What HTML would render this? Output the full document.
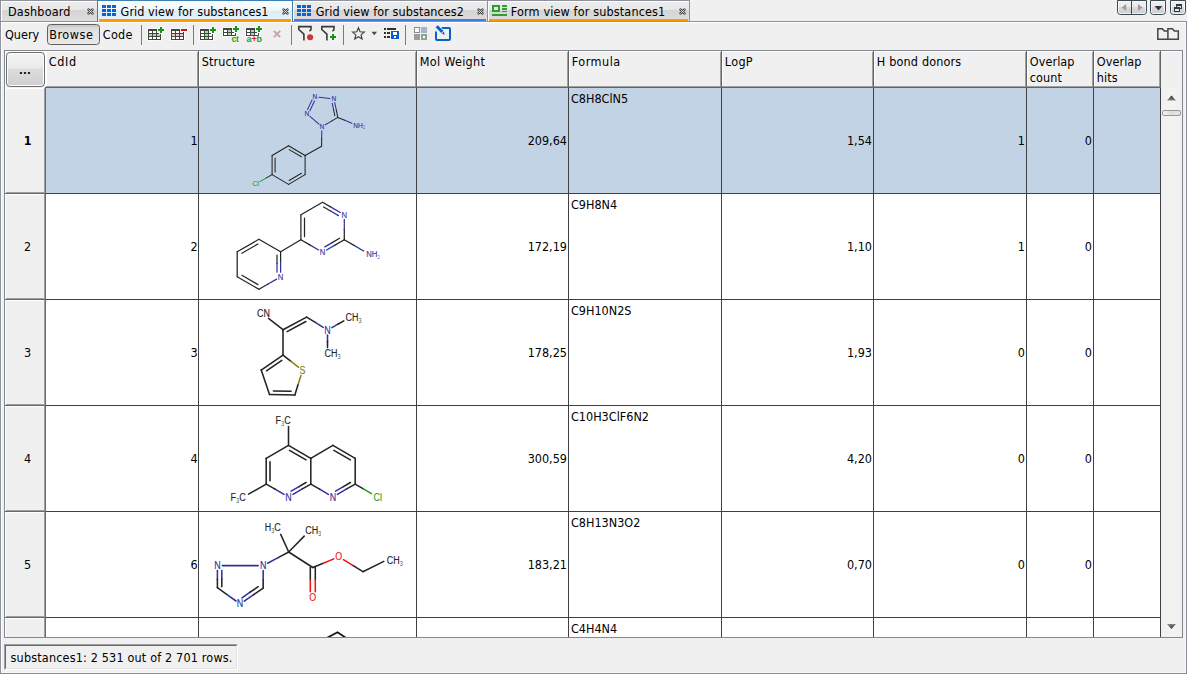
<!DOCTYPE html>
<html><head><meta charset="utf-8"><title>Grid view</title>
<style>
html,body{margin:0;padding:0}
body{width:1187px;height:674px;overflow:hidden;background:#f0f0f0;position:relative;
 font-family:"DejaVu Sans Condensed","Liberation Sans",sans-serif;font-size:12.5px;line-height:15px;color:#000}
.a{position:absolute}
.t{position:absolute;white-space:nowrap;line-height:15px;height:15px}
.r{text-align:right}
.b{font-weight:bold}
.tab{position:absolute;top:1px;height:20px;background:linear-gradient(#ececec 0,#e8e8e8 8px,#d4d4d4 8px,#dedede 19px);border-left:1px solid #fff;border-top:1px solid #fff;box-sizing:border-box}
.vs{position:absolute;width:1px;background:#8e929c}
.hc{position:absolute;top:52px;height:34px;background:#f0f0f0}
.vl{position:absolute;width:1px;background:#404040;top:88px;height:549px}
.hl{position:absolute;height:1px;background:#404040;left:46px;width:1115px}
.sep{position:absolute;top:25px;height:20px;width:1px;background:#7a7a7a}
svg{position:absolute;left:0;top:0;overflow:visible}
</style></head>
<body>
<div class="a" style="left:0;top:21px;width:1187px;height:1px;background:#8e929c"></div>
<div class="a" style="left:0;top:22px;width:1186px;height:1px;background:#fff"></div>
<div class="a" style="left:0;top:0;width:1px;height:674px;background:#8e929c"></div>
<div class="a" style="left:1px;top:1px;width:1px;height:20px;background:#fff"></div>
<div class="a" style="left:1px;top:22px;width:1px;height:650px;background:#fff"></div>
<div class="a" style="left:1186px;top:21px;width:1px;height:653px;background:#85899a"></div>
<div class="a" style="left:1185px;top:23px;width:1px;height:650px;background:#f8f8f8"></div>
<div class="a" style="left:0;top:673px;width:1187px;height:1px;background:#85899a"></div>
<div class="a" style="left:2px;top:672px;width:1184px;height:1px;background:#f8f8f8"></div>
<div class="a" style="left:0;top:0;width:690px;height:1px;background:#8e929c"></div>
<div class="tab" style="left:1px;width:96px"></div>
<div class="t" id="tx_dash" style="left:8px;letter-spacing:.19px;top:4px">Dashboard</div>
<div class="a" style="left:97px;top:0;width:196px;height:22px;background:linear-gradient(#fbfdfe 0,#f1f8fc 9px,#dcecf6 10px,#e9f3fa 20px);box-sizing:border-box;border:1px solid #3c7fb1;border-bottom:none"></div>
<div class="a" style="left:99px;top:19px;width:192px;height:3px;background:#ff9c00"></div>
<div class="t" id="tx_g1" style="left:120.6px;letter-spacing:.07px;top:4px">Grid view for substances1</div>
<div class="tab" style="left:293px;width:194px"></div>
<div class="a" style="left:294px;top:19px;width:192px;height:2px;background:#3f7fe0"></div>
<div class="vs" style="left:487px;top:0;height:21px"></div>
<div class="t" id="tx_g2" style="left:315.8px;letter-spacing:.08px;top:4px">Grid view for substances2</div>
<div class="tab" style="left:488px;width:201px"></div>
<div class="a" style="left:489px;top:19px;width:199px;height:2px;background:#ff9c00"></div>
<div class="vs" style="left:689px;top:0;height:21px"></div>
<div class="t" id="tx_f1" style="left:510.8px;letter-spacing:.15px;top:4px">Form view for substances1</div>
<div class="t" id="tx_query" style="left:5px;top:27px">Query</div>
<div class="a" style="left:47px;top:24px;width:53px;height:21px;box-sizing:border-box;border:1px solid #606060;border-radius:3.5px;background:linear-gradient(#c4c4c4 0,#dadada 3px,#e1e1e1 6px,#e9e9e9 19px)"></div>
<div class="t" id="tx_browse" style="left:49.2px;letter-spacing:.56px;top:27px">Browse</div>
<div class="t" id="tx_code" style="left:102.8px;letter-spacing:.27px;top:27px">Code</div>
<div class="sep" style="left:141px"></div>
<div class="sep" style="left:193px"></div>
<div class="sep" style="left:291px"></div>
<div class="sep" style="left:343px"></div>
<div class="sep" style="left:405px"></div>
<div class="a" style="left:4px;top:50px;width:1179px;height:588px;box-sizing:border-box;border:1px solid #828790"></div>
<div class="a" style="left:5px;top:51px;width:1177px;height:1px;background:#fff"></div>
<div class="a" style="left:5px;top:51px;width:1px;height:586px;background:#fff"></div>
<div class="a" style="left:46px;top:88px;width:1114px;height:549px;background:#fff"></div>
<div class="a" style="left:46px;top:88px;width:1114px;height:105px;background:#c3d3e6"></div>
<div class="a" style="left:46px;top:86px;width:1115px;height:1px;background:#a0a0a0"></div>
<div class="a" style="left:45px;top:87px;width:1116px;height:1px;background:#646464"></div>
<div class="a" style="left:45px;top:52px;width:2px;height:34px;background:#fff"></div>
<div class="a" style="left:197px;top:52px;width:1px;height:35px;background:#a0a0a0"></div>
<div class="a" style="left:198px;top:51px;width:1px;height:37px;background:#646464"></div>
<div class="t" id="h0" style="left:48.8px;top:53.5px;height:auto;line-height:16px;letter-spacing:0.62px">CdId</div>
<div class="a" style="left:199px;top:52px;width:1px;height:34px;background:#fff"></div>
<div class="a" style="left:415px;top:52px;width:1px;height:35px;background:#a0a0a0"></div>
<div class="a" style="left:416px;top:51px;width:1px;height:37px;background:#646464"></div>
<div class="t" id="h1" style="left:201.8px;top:53.5px;height:auto;line-height:16px;letter-spacing:0.12px">Structure</div>
<div class="a" style="left:417px;top:52px;width:1px;height:34px;background:#fff"></div>
<div class="a" style="left:567px;top:52px;width:1px;height:35px;background:#a0a0a0"></div>
<div class="a" style="left:568px;top:51px;width:1px;height:37px;background:#646464"></div>
<div class="t" id="h2" style="left:419.8px;top:53.5px;height:auto;line-height:16px;letter-spacing:0.3px">Mol Weight</div>
<div class="a" style="left:569px;top:52px;width:1px;height:34px;background:#fff"></div>
<div class="a" style="left:720px;top:52px;width:1px;height:35px;background:#a0a0a0"></div>
<div class="a" style="left:721px;top:51px;width:1px;height:37px;background:#646464"></div>
<div class="t" id="h3" style="left:571.8px;top:53.5px;height:auto;line-height:16px;letter-spacing:0.5px">Formula</div>
<div class="a" style="left:722px;top:52px;width:1px;height:34px;background:#fff"></div>
<div class="a" style="left:872px;top:52px;width:1px;height:35px;background:#a0a0a0"></div>
<div class="a" style="left:873px;top:51px;width:1px;height:37px;background:#646464"></div>
<div class="t" id="h4" style="left:724.8px;top:53.5px;height:auto;line-height:16px;letter-spacing:0.33px">LogP</div>
<div class="a" style="left:874px;top:52px;width:1px;height:34px;background:#fff"></div>
<div class="a" style="left:1025px;top:52px;width:1px;height:35px;background:#a0a0a0"></div>
<div class="a" style="left:1026px;top:51px;width:1px;height:37px;background:#646464"></div>
<div class="t" id="h5" style="left:876.8px;top:53.5px;height:auto;line-height:16px;letter-spacing:0.17px">H bond donors</div>
<div class="a" style="left:1027px;top:52px;width:1px;height:34px;background:#fff"></div>
<div class="a" style="left:1092px;top:52px;width:1px;height:35px;background:#a0a0a0"></div>
<div class="a" style="left:1093px;top:51px;width:1px;height:37px;background:#646464"></div>
<div class="t" id="h6" style="left:1029.8px;top:53.5px;height:auto;line-height:16px;letter-spacing:0.08px">Overlap<br>count</div>
<div class="a" style="left:1094px;top:52px;width:1px;height:34px;background:#fff"></div>
<div class="a" style="left:1159px;top:52px;width:1px;height:35px;background:#a0a0a0"></div>
<div class="a" style="left:1160px;top:51px;width:1px;height:37px;background:#646464"></div>
<div class="t" id="h7" style="left:1096.8px;top:53.5px;height:auto;line-height:16px;letter-spacing:0.08px">Overlap<br>hits</div>
<div class="vl" style="left:198px"></div>
<div class="vl" style="left:416px"></div>
<div class="vl" style="left:568px"></div>
<div class="vl" style="left:721px"></div>
<div class="vl" style="left:873px"></div>
<div class="vl" style="left:1026px"></div>
<div class="vl" style="left:1093px"></div>
<div class="vl" style="left:1160px"></div>
<div class="a" style="left:44px;top:88px;width:1px;height:549px;background:#a0a0a0"></div>
<div class="a" style="left:45px;top:88px;width:1px;height:549px;background:#696969"></div>
<div class="a" style="left:6px;top:88px;width:38px;height:1px;background:#fff"></div>
<div class="a" style="left:6px;top:192px;width:39px;height:1px;background:#a0a0a0"></div>
<div class="a" style="left:5px;top:193px;width:41px;height:1px;background:#696969"></div>
<div class="hl" style="top:193px"></div>
<div class="a" style="left:6px;top:194px;width:38px;height:1px;background:#fff"></div>
<div class="a" style="left:6px;top:298px;width:39px;height:1px;background:#a0a0a0"></div>
<div class="a" style="left:5px;top:299px;width:41px;height:1px;background:#696969"></div>
<div class="hl" style="top:299px"></div>
<div class="a" style="left:6px;top:300px;width:38px;height:1px;background:#fff"></div>
<div class="a" style="left:6px;top:404px;width:39px;height:1px;background:#a0a0a0"></div>
<div class="a" style="left:5px;top:405px;width:41px;height:1px;background:#696969"></div>
<div class="hl" style="top:405px"></div>
<div class="a" style="left:6px;top:406px;width:38px;height:1px;background:#fff"></div>
<div class="a" style="left:6px;top:510px;width:39px;height:1px;background:#a0a0a0"></div>
<div class="a" style="left:5px;top:511px;width:41px;height:1px;background:#696969"></div>
<div class="hl" style="top:511px"></div>
<div class="a" style="left:6px;top:512px;width:38px;height:1px;background:#fff"></div>
<div class="a" style="left:6px;top:616px;width:39px;height:1px;background:#a0a0a0"></div>
<div class="a" style="left:5px;top:617px;width:41px;height:1px;background:#696969"></div>
<div class="hl" style="top:617px"></div>
<div class="a" style="left:6px;top:618px;width:38px;height:1px;background:#fff"></div>
<div class="a" style="left:6px;top:52px;width:39px;height:35px;box-sizing:border-box;border:1px solid #707070;border-radius:4px;background:linear-gradient(#f4f4f4 0,#ebebeb 15px,#dddddd 16px,#cfcfcf 33px);box-shadow:inset 0 0 0 1px #fbfbfb"></div>
<div class="t b" id="dots" style="left:19px;top:63px;letter-spacing:0.2px;font-size:11px">...</div>
<div class="t b" id="rn0" style="left:8.6px;width:38px;text-align:center;top:133px">1</div>
<div class="t r" id="cd0" style="left:46px;width:151.6px;top:133px">1</div>
<div class="t r" id="mw0" style="left:417px;width:150px;top:133px">209,64</div>
<div class="t" id="fm0" style="left:571px;top:91px">C8H8ClN5</div>
<div class="t r" id="lp0" style="left:722px;width:150px;top:133px">1,54</div>
<div class="t r" id="hb0" style="left:874px;width:151px;top:133px">1</div>
<div class="t r" id="oc0" style="left:1027px;width:65px;top:133px">0</div>
<div class="t" id="rn1" style="left:8.6px;width:38px;text-align:center;top:239px">2</div>
<div class="t r" id="cd1" style="left:46px;width:151.6px;top:239px">2</div>
<div class="t r" id="mw1" style="left:417px;width:150px;top:239px">172,19</div>
<div class="t" id="fm1" style="left:571px;top:197px">C9H8N4</div>
<div class="t r" id="lp1" style="left:722px;width:150px;top:239px">1,10</div>
<div class="t r" id="hb1" style="left:874px;width:151px;top:239px">1</div>
<div class="t r" id="oc1" style="left:1027px;width:65px;top:239px">0</div>
<div class="t" id="rn2" style="left:8.6px;width:38px;text-align:center;top:345px">3</div>
<div class="t r" id="cd2" style="left:46px;width:151.6px;top:345px">3</div>
<div class="t r" id="mw2" style="left:417px;width:150px;top:345px">178,25</div>
<div class="t" id="fm2" style="left:571px;top:303px">C9H10N2S</div>
<div class="t r" id="lp2" style="left:722px;width:150px;top:345px">1,93</div>
<div class="t r" id="hb2" style="left:874px;width:151px;top:345px">0</div>
<div class="t r" id="oc2" style="left:1027px;width:65px;top:345px">0</div>
<div class="t" id="rn3" style="left:8.6px;width:38px;text-align:center;top:451px">4</div>
<div class="t r" id="cd3" style="left:46px;width:151.6px;top:451px">4</div>
<div class="t r" id="mw3" style="left:417px;width:150px;top:451px">300,59</div>
<div class="t" id="fm3" style="left:571px;top:409px">C10H3ClF6N2</div>
<div class="t r" id="lp3" style="left:722px;width:150px;top:451px">4,20</div>
<div class="t r" id="hb3" style="left:874px;width:151px;top:451px">0</div>
<div class="t r" id="oc3" style="left:1027px;width:65px;top:451px">0</div>
<div class="t" id="rn4" style="left:8.6px;width:38px;text-align:center;top:557px">5</div>
<div class="t r" id="cd4" style="left:46px;width:151.6px;top:557px">6</div>
<div class="t r" id="mw4" style="left:417px;width:150px;top:557px">183,21</div>
<div class="t" id="fm4" style="left:571px;top:515px">C8H13N3O2</div>
<div class="t r" id="lp4" style="left:722px;width:150px;top:557px">0,70</div>
<div class="t r" id="hb4" style="left:874px;width:151px;top:557px">0</div>
<div class="t r" id="oc4" style="left:1027px;width:65px;top:557px">0</div>
<div class="t" id="fm5" style="left:571px;top:621px">C4H4N4</div>
<div class="a" style="left:4px;top:637px;width:1179px;height:1px;background:#828790"></div>
<div class="a" style="left:1161px;top:88px;width:21px;height:549px;background:linear-gradient(90deg,#f0f0f0,#f3f3f3 50%,#f0f0f0)"></div>
<div class="a" style="left:1162px;top:110px;width:19px;height:6px;box-sizing:border-box;border:1px solid #979797;border-radius:2px;background:linear-gradient(90deg,#f4f4f4,#dcdcdc 50%,#e6e6e6)"></div>
<div class="a" style="left:4px;top:644px;width:234px;height:26px;box-sizing:border-box;border-top:1px solid #a0a0a0;border-left:1px solid #a0a0a0;border-right:1px solid #fff;border-bottom:1px solid #fff"></div>
<div class="a" style="left:5px;top:645px;width:232px;height:24px;box-sizing:border-box;border-top:1px solid #696969;border-left:1px solid #696969;border-right:1px solid #e3e3e3;border-bottom:1px solid #e3e3e3"></div>
<div class="t" id="status" style="left:10.6px;letter-spacing:.17px;top:650px">substances1: 2 531 out of 2 701 rows.</div>
<svg width="1187" height="674" viewBox="0 0 1187 674" font-family="Liberation Sans,sans-serif">
<defs><clipPath id="cp"><rect x="199" y="88" width="217" height="549"/></clipPath></defs>
<g clip-path="url(#cp)" fill="none" stroke-width="1.05" stroke-linecap="round">
<path d="M318.9 97.3L330.0 98.4" stroke="#31319c"/>
<path d="M334.7 102.6L336.3 110.0" stroke="#31319c"/>
<path d="M336.3 110.0L337.8 117.4" stroke="#242424"/>
<path d="M332.2 103.2L333.5 109.4" stroke="#31319c"/>
<path d="M333.5 109.4L334.8 115.7" stroke="#242424"/>
<path d="M337.8 117.4L331.5 121.1" stroke="#242424"/>
<path d="M331.5 121.1L325.3 124.8" stroke="#31319c"/>
<path d="M319.0 124.2L309.9 116.3" stroke="#31319c"/>
<path d="M309.9 110.7L314.5 101.0" stroke="#31319c"/>
<path d="M307.5 109.6L312.1 99.9" stroke="#31319c"/>
<path d="M337.8 117.4L344.8 120.3" stroke="#242424"/>
<path d="M344.8 120.3L351.8 123.2" stroke="#31319c"/>
<path d="M321.8 130.7L321.7 138.4" stroke="#31319c"/>
<path d="M321.7 138.4L321.6 146.2" stroke="#242424"/>
<path d="M321.6 146.2L305.1 155.5" stroke="#242424"/>
<path d="M305.1 155.5L288.6 145.8" stroke="#242424"/>
<path d="M301.4 156.8L289.2 149.6" stroke="#242424"/>
<path d="M288.6 145.8L272.1 155.5" stroke="#242424"/>
<path d="M272.1 155.5L272.1 174.6" stroke="#242424"/>
<path d="M275.1 158.0L275.1 172.1" stroke="#242424"/>
<path d="M272.1 174.6L288.6 184.4" stroke="#242424"/>
<path d="M288.6 184.4L305.1 174.6" stroke="#242424"/>
<path d="M289.2 180.5L301.4 173.3" stroke="#242424"/>
<path d="M305.1 174.6L305.1 155.5" stroke="#242424"/>
<path d="M272.1 174.6L266.0 178.1" stroke="#242424"/>
<path d="M266.0 178.1L260.0 181.6" stroke="#1ea01e"/>
</g><g clip-path="url(#cp)" stroke="none">
<text transform="translate(315.0,99.4) scale(0.86,1)" font-size="7.7" fill="#31319c" stroke="#31319c" stroke-width="0.12" text-anchor="middle">N</text>
<text transform="translate(333.9,101.3) scale(0.86,1)" font-size="7.7" fill="#31319c" stroke="#31319c" stroke-width="0.12" text-anchor="middle">N</text>
<text transform="translate(321.9,129.3) scale(0.86,1)" font-size="7.7" fill="#31319c" stroke="#31319c" stroke-width="0.12" text-anchor="middle">N</text>
<text transform="translate(307.0,116.2) scale(0.86,1)" font-size="7.7" fill="#31319c" stroke="#31319c" stroke-width="0.12" text-anchor="middle">N</text>
<text transform="translate(353.2,127.5) scale(0.86,1)" font-size="7.7" fill="#31319c" stroke="#31319c" stroke-width="0.12" text-anchor="start">NH<tspan font-size="4.7" dy="1.5" fill-opacity="0.8" stroke="none">2</tspan></text>
<text transform="translate(252.6,186.4) scale(0.86,1)" font-size="7.7" fill="#1ea01e" stroke="#1ea01e" stroke-width="0.12" text-anchor="start">Cl</text>
</g><g clip-path="url(#cp)" fill="none" stroke-width="1.25" stroke-linecap="round">
<path d="M322.6 202.3L331.4 207.4" stroke="#242424"/>
<path d="M331.4 207.4L340.3 212.5" stroke="#31319c"/>
<path d="M323.6 207.0L331.0 211.3" stroke="#242424"/>
<path d="M331.0 211.3L338.5 215.6" stroke="#31319c"/>
<path d="M344.3 219.4L344.3 229.6" stroke="#31319c"/>
<path d="M344.3 229.6L344.3 239.8" stroke="#242424"/>
<path d="M344.3 239.8L335.4 244.9" stroke="#242424"/>
<path d="M335.4 244.9L326.6 250.0" stroke="#31319c"/>
<path d="M339.6 238.3L332.2 242.6" stroke="#242424"/>
<path d="M332.2 242.6L324.8 246.9" stroke="#31319c"/>
<path d="M318.6 250.0L309.8 244.9" stroke="#31319c"/>
<path d="M309.8 244.9L300.9 239.8" stroke="#242424"/>
<path d="M300.9 239.8L300.9 214.8" stroke="#242424"/>
<path d="M304.5 236.6L304.5 218.1" stroke="#242424"/>
<path d="M300.9 214.8L322.6 202.3" stroke="#242424"/>
<path d="M258.9 239.3L280.6 251.8" stroke="#242424"/>
<path d="M280.6 251.8L280.6 262.0" stroke="#242424"/>
<path d="M280.6 262.0L280.6 272.2" stroke="#31319c"/>
<path d="M277.0 255.1L277.0 263.6" stroke="#242424"/>
<path d="M277.0 263.6L277.0 272.2" stroke="#31319c"/>
<path d="M276.6 279.1L267.7 284.2" stroke="#31319c"/>
<path d="M267.7 284.2L258.9 289.3" stroke="#242424"/>
<path d="M258.9 289.3L237.2 276.8" stroke="#242424"/>
<path d="M257.9 284.6L241.9 275.3" stroke="#242424"/>
<path d="M237.2 276.8L237.2 251.8" stroke="#242424"/>
<path d="M237.2 251.8L258.9 239.3" stroke="#242424"/>
<path d="M241.9 253.3L257.9 244.0" stroke="#242424"/>
<path d="M300.9 239.8L280.6 251.8" stroke="#242424"/>
<path d="M344.3 239.8L354.0 245.4" stroke="#242424"/>
<path d="M354.0 245.4L363.7 251.0" stroke="#31319c"/>
</g><g clip-path="url(#cp)" stroke="none">
<text transform="translate(344.3,217.8) scale(0.86,1)" font-size="9.0" fill="#31319c" stroke="#31319c" stroke-width="0.12" text-anchor="middle">N</text>
<text transform="translate(322.6,255.3) scale(0.86,1)" font-size="9.0" fill="#31319c" stroke="#31319c" stroke-width="0.12" text-anchor="middle">N</text>
<text transform="translate(280.6,279.8) scale(0.86,1)" font-size="9.0" fill="#31319c" stroke="#31319c" stroke-width="0.12" text-anchor="middle">N</text>
<text transform="translate(366.2,257.3) scale(0.86,1)" font-size="9.0" fill="#31319c" stroke="#31319c" stroke-width="0.12" text-anchor="start">NH<tspan font-size="5.6" dy="1.8" fill-opacity="0.8" stroke="none">2</tspan></text>
</g><g clip-path="url(#cp)" fill="none" stroke-width="1.55" stroke-linecap="round">
<path d="M283.0 329.7L268.5 318.4" stroke="#242424"/>
<path d="M283.0 329.7L306.6 317.1" stroke="#242424"/>
<path d="M287.1 331.6L305.9 321.5" stroke="#242424"/>
<path d="M306.6 317.1L314.9 322.2" stroke="#242424"/>
<path d="M314.9 322.2L323.2 327.4" stroke="#31319c"/>
<path d="M331.9 327.6L337.9 324.2" stroke="#31319c"/>
<path d="M337.9 324.2L343.8 320.9" stroke="#242424"/>
<path d="M327.5 335.0L327.5 341.3" stroke="#31319c"/>
<path d="M327.5 341.3L327.5 347.6" stroke="#242424"/>
<path d="M283.0 329.7L283.0 355.2" stroke="#242424"/>
<path d="M283.0 355.2L290.7 361.2" stroke="#242424"/>
<path d="M290.7 361.2L298.4 367.2" stroke="#848410"/>
<path d="M301.0 375.4L297.9 385.1" stroke="#848410"/>
<path d="M297.9 385.1L294.9 394.9" stroke="#242424"/>
<path d="M294.9 394.9L269.5 394.5" stroke="#242424"/>
<path d="M291.1 391.2L273.4 391.0" stroke="#242424"/>
<path d="M269.5 394.5L261.2 370.1" stroke="#242424"/>
<path d="M261.2 370.1L283.0 355.2" stroke="#242424"/>
<path d="M266.5 370.8L281.8 360.4" stroke="#242424"/>
</g><g clip-path="url(#cp)" stroke="none">
<text transform="translate(257.0,317.4) scale(0.86,1)" font-size="10.4" fill="#242424" stroke="#242424" stroke-width="0.12" text-anchor="start">CN</text>
<text transform="translate(327.5,333.5) scale(0.86,1)" font-size="10.4" fill="#31319c" stroke="#31319c" stroke-width="0.12" text-anchor="middle">N</text>
<text transform="translate(345.6,321.2) scale(0.86,1)" font-size="10.4" fill="#242424" stroke="#242424" stroke-width="0.12" text-anchor="start">CH<tspan font-size="6.5" dy="2.1" fill-opacity="0.8" stroke="none">3</tspan></text>
<text transform="translate(324.6,357.3) scale(0.86,1)" font-size="10.4" fill="#242424" stroke="#242424" stroke-width="0.12" text-anchor="start">CH<tspan font-size="6.5" dy="2.1" fill-opacity="0.8" stroke="none">3</tspan></text>
<text transform="translate(302.5,373.9) scale(0.86,1)" font-size="10.4" fill="#848410" stroke="#848410" stroke-width="0.12" text-anchor="middle">S</text>
</g><g clip-path="url(#cp)" fill="none" stroke-width="1.55" stroke-linecap="round">
<path d="M288.5 445.4L310.8 458.3" stroke="#242424"/>
<path d="M289.5 450.4L306.0 459.9" stroke="#242424"/>
<path d="M310.8 458.3L310.8 484.1" stroke="#242424"/>
<path d="M310.8 484.1L301.9 489.2" stroke="#242424"/>
<path d="M301.9 489.2L293.0 494.4" stroke="#31319c"/>
<path d="M306.0 482.5L298.6 486.8" stroke="#242424"/>
<path d="M298.6 486.8L291.1 491.1" stroke="#31319c"/>
<path d="M284.0 494.4L275.1 489.2" stroke="#31319c"/>
<path d="M275.1 489.2L266.2 484.1" stroke="#242424"/>
<path d="M266.2 484.1L266.2 458.3" stroke="#242424"/>
<path d="M270.0 480.7L270.0 461.7" stroke="#242424"/>
<path d="M266.2 458.3L288.5 445.4" stroke="#242424"/>
<path d="M310.8 458.3L332.9 445.4" stroke="#242424"/>
<path d="M332.9 445.4L355.2 458.3" stroke="#242424"/>
<path d="M333.9 450.4L350.4 459.9" stroke="#242424"/>
<path d="M355.2 458.3L355.2 484.1" stroke="#242424"/>
<path d="M355.2 484.1L346.3 489.2" stroke="#242424"/>
<path d="M346.3 489.2L337.4 494.4" stroke="#31319c"/>
<path d="M350.4 482.5L343.0 486.8" stroke="#242424"/>
<path d="M343.0 486.8L335.5 491.1" stroke="#31319c"/>
<path d="M328.4 494.4L319.6 489.2" stroke="#31319c"/>
<path d="M319.6 489.2L310.8 484.1" stroke="#242424"/>
<path d="M288.5 445.4L288.5 426.4" stroke="#242424"/>
<path d="M266.2 484.1L248.6 494.1" stroke="#242424"/>
<path d="M355.2 484.1L363.4 488.8" stroke="#242424"/>
<path d="M363.4 488.8L371.5 493.6" stroke="#1ea01e"/>
</g><g clip-path="url(#cp)" stroke="none">
<text transform="translate(288.5,500.5) scale(0.86,1)" font-size="10.4" fill="#31319c" stroke="#31319c" stroke-width="0.12" text-anchor="middle">N</text>
<text transform="translate(332.9,500.5) scale(0.86,1)" font-size="10.4" fill="#31319c" stroke="#31319c" stroke-width="0.12" text-anchor="middle">N</text>
<text transform="translate(275.6,424.3) scale(0.86,1)" font-size="10.4" fill="#242424" stroke="#242424" stroke-width="0.12" text-anchor="start">F<tspan font-size="6.5" dy="2.1" fill-opacity="0.8" stroke="none">3</tspan><tspan dy="-2.1">C</tspan></text>
<text transform="translate(230.6,501.3) scale(0.86,1)" font-size="10.4" fill="#242424" stroke="#242424" stroke-width="0.12" text-anchor="start">F<tspan font-size="6.5" dy="2.1" fill-opacity="0.8" stroke="none">3</tspan><tspan dy="-2.1">C</tspan></text>
<text transform="translate(373.6,500.6) scale(0.86,1)" font-size="10.4" fill="#1ea01e" stroke="#1ea01e" stroke-width="0.12" text-anchor="start">Cl</text>
</g><g clip-path="url(#cp)" fill="none" stroke-width="1.55" stroke-linecap="round">
<path d="M288.7 552.0L280.7 534.4" stroke="#242424"/>
<path d="M288.7 552.0L304.2 536.1" stroke="#242424"/>
<path d="M288.7 552.0L278.2 557.6" stroke="#242424"/>
<path d="M278.2 557.6L267.6 563.2" stroke="#31319c"/>
<path d="M258.2 565.6L222.4 565.6" stroke="#31319c"/>
<path d="M217.4 570.6L217.4 579.2" stroke="#31319c"/>
<path d="M217.4 579.2L217.4 587.7" stroke="#242424"/>
<path d="M221.8 570.6L221.8 578.7" stroke="#31319c"/>
<path d="M221.8 578.7L221.8 586.8" stroke="#242424"/>
<path d="M217.4 587.7L226.7 594.3" stroke="#242424"/>
<path d="M226.7 594.3L236.0 601.0" stroke="#31319c"/>
<path d="M244.2 601.1L253.7 594.6" stroke="#31319c"/>
<path d="M253.7 594.6L263.2 588.1" stroke="#242424"/>
<path d="M242.0 597.8L250.1 592.2" stroke="#31319c"/>
<path d="M250.1 592.2L258.2 586.7" stroke="#242424"/>
<path d="M263.2 588.1L263.2 579.4" stroke="#242424"/>
<path d="M263.2 579.4L263.2 570.6" stroke="#31319c"/>
<path d="M288.7 552.0L312.8 567.5" stroke="#242424"/>
<path d="M310.3 567.5L310.3 579.6" stroke="#242424"/>
<path d="M310.3 579.6L310.3 591.8" stroke="#f21212"/>
<path d="M315.3 567.5L315.3 579.6" stroke="#242424"/>
<path d="M315.3 579.6L315.3 591.8" stroke="#f21212"/>
<path d="M312.8 567.5L323.3 563.2" stroke="#242424"/>
<path d="M323.3 563.2L333.8 558.9" stroke="#f21212"/>
<path d="M343.4 559.7L353.2 565.7" stroke="#f21212"/>
<path d="M353.2 565.7L362.9 571.7" stroke="#242424"/>
<path d="M362.9 571.7L383.8 561.4" stroke="#242424"/>
</g><g clip-path="url(#cp)" stroke="none">
<text transform="translate(263.2,569.1) scale(0.86,1)" font-size="10.4" fill="#31319c" stroke="#31319c" stroke-width="0.12" text-anchor="middle">N</text>
<text transform="translate(217.4,569.1) scale(0.86,1)" font-size="10.4" fill="#31319c" stroke="#31319c" stroke-width="0.12" text-anchor="middle">N</text>
<text transform="translate(240.1,607.4) scale(0.86,1)" font-size="10.4" fill="#31319c" stroke="#31319c" stroke-width="0.12" text-anchor="middle">N</text>
<text transform="translate(264.8,531.2) scale(0.86,1)" font-size="10.4" fill="#242424" stroke="#242424" stroke-width="0.12" text-anchor="start">H<tspan font-size="6.5" dy="2.1" fill-opacity="0.8" stroke="none">3</tspan><tspan dy="-2.1">C</tspan></text>
<text transform="translate(305.2,534.3) scale(0.86,1)" font-size="10.4" fill="#242424" stroke="#242424" stroke-width="0.12" text-anchor="start">CH<tspan font-size="6.5" dy="2.1" fill-opacity="0.8" stroke="none">3</tspan></text>
<text transform="translate(312.8,600.9) scale(0.86,1)" font-size="10.4" fill="#f21212" stroke="#f21212" stroke-width="0.12" text-anchor="middle">O</text>
<text transform="translate(338.8,560.4) scale(0.86,1)" font-size="10.4" fill="#f21212" stroke="#f21212" stroke-width="0.12" text-anchor="middle">O</text>
<text transform="translate(386.8,564.0) scale(0.86,1)" font-size="10.4" fill="#242424" stroke="#242424" stroke-width="0.12" text-anchor="start">CH<tspan font-size="6.5" dy="2.1" fill-opacity="0.8" stroke="none">3</tspan></text>
</g><g clip-path="url(#cp)" fill="none" stroke-width="1.55" stroke-linecap="round">
<path d="M318.9 642.2L337.5 632.2L352.4 642.2" stroke="#151515" stroke-width="1.8" stroke-linejoin="miter"/>
</g></svg>
<svg width="1187" height="674" viewBox="0 0 1187 674">
<g shape-rendering="crispEdges">
<rect x="102" y="5" width="4" height="3" fill="#0a64d2" />
<rect x="102" y="9" width="4" height="3" fill="#0a64d2" />
<rect x="102" y="13" width="4" height="3" fill="#0a64d2" />
<rect x="107" y="5" width="4" height="3" fill="#0a64d2" />
<rect x="107" y="9" width="4" height="3" fill="#0a64d2" />
<rect x="107" y="13" width="4" height="3" fill="#0a64d2" />
<rect x="112" y="5" width="4" height="3" fill="#0a64d2" />
<rect x="112" y="9" width="4" height="3" fill="#0a64d2" />
<rect x="112" y="13" width="4" height="3" fill="#0a64d2" />
<rect x="297" y="5" width="4" height="3" fill="#0a64d2" />
<rect x="297" y="9" width="4" height="3" fill="#0a64d2" />
<rect x="297" y="13" width="4" height="3" fill="#0a64d2" />
<rect x="302" y="5" width="4" height="3" fill="#0a64d2" />
<rect x="302" y="9" width="4" height="3" fill="#0a64d2" />
<rect x="302" y="13" width="4" height="3" fill="#0a64d2" />
<rect x="307" y="5" width="4" height="3" fill="#0a64d2" />
<rect x="307" y="9" width="4" height="3" fill="#0a64d2" />
<rect x="307" y="13" width="4" height="3" fill="#0a64d2" />
<rect x="492" y="5" width="8" height="2" fill="#2e9e2e" />
<rect x="492" y="10" width="8" height="2" fill="#2e9e2e" />
<rect x="492" y="5" width="2" height="7" fill="#2e9e2e" />
<rect x="498" y="5" width="2" height="7" fill="#2e9e2e" />
<rect x="502" y="5" width="5" height="2" fill="#2e9e2e" />
<rect x="502" y="8" width="5" height="2" fill="#2e9e2e" />
<rect x="502" y="11" width="5" height="1" fill="#2e9e2e" />
<rect x="492" y="14" width="15" height="2" fill="#2e9e2e" />
</g>
<g transform="translate(87,8)" stroke-linecap="round"><path d="M1.6 1.6L5.4 5.4M5.4 1.6L1.6 5.4" stroke="#474747" stroke-width="2.7" fill="none"/><path d="M1.7 1.7L5.3 5.3M5.3 1.7L1.7 5.3" stroke="#e4e4e4" stroke-width="0.95" fill="none"/></g>
<g transform="translate(282,8)" stroke-linecap="round"><path d="M1.6 1.6L5.4 5.4M5.4 1.6L1.6 5.4" stroke="#474747" stroke-width="2.7" fill="none"/><path d="M1.7 1.7L5.3 5.3M5.3 1.7L1.7 5.3" stroke="#e4e4e4" stroke-width="0.95" fill="none"/></g>
<g transform="translate(477,8)" stroke-linecap="round"><path d="M1.6 1.6L5.4 5.4M5.4 1.6L1.6 5.4" stroke="#474747" stroke-width="2.7" fill="none"/><path d="M1.7 1.7L5.3 5.3M5.3 1.7L1.7 5.3" stroke="#e4e4e4" stroke-width="0.95" fill="none"/></g>
<g transform="translate(679,8)" stroke-linecap="round"><path d="M1.6 1.6L5.4 5.4M5.4 1.6L1.6 5.4" stroke="#474747" stroke-width="2.7" fill="none"/><path d="M1.7 1.7L5.3 5.3M5.3 1.7L1.7 5.3" stroke="#e4e4e4" stroke-width="0.95" fill="none"/></g>
<g shape-rendering="crispEdges">
<rect x="147" y="28" width="15" height="13" fill="#fafafa" />
<rect x="148" y="29" width="13" height="11" fill="#444444" />
<rect x="149" y="31" width="3" height="2" fill="#ffffff" />
<rect x="153" y="31" width="3" height="2" fill="#ffffff" />
<rect x="157" y="31" width="3" height="2" fill="#ffffff" />
<rect x="149" y="34" width="3" height="2" fill="#a4dca4" />
<rect x="153" y="34" width="3" height="2" fill="#a4dca4" />
<rect x="157" y="34" width="3" height="2" fill="#a4dca4" />
<rect x="149" y="37" width="3" height="2" fill="#ffffff" />
<rect x="153" y="37" width="3" height="2" fill="#ffffff" />
<rect x="157" y="37" width="3" height="2" fill="#ffffff" />
</g>
<g shape-rendering="crispEdges">
<rect x="157" y="28" width="8" height="4" fill="#f6f6f6" />
<rect x="159" y="26" width="4" height="8" fill="#f6f6f6" />
<rect x="158" y="29" width="6" height="2" fill="#149414" />
<rect x="160" y="27" width="2" height="6" fill="#149414" />
</g>
<g shape-rendering="crispEdges">
<rect x="170" y="28" width="15" height="13" fill="#fafafa" />
<rect x="171" y="29" width="13" height="11" fill="#444444" />
<rect x="172" y="31" width="3" height="2" fill="#ffffff" />
<rect x="176" y="31" width="3" height="2" fill="#ffffff" />
<rect x="180" y="31" width="3" height="2" fill="#ffffff" />
<rect x="172" y="34" width="3" height="2" fill="#f9c6c6" />
<rect x="176" y="34" width="3" height="2" fill="#f9c6c6" />
<rect x="180" y="34" width="3" height="2" fill="#f9c6c6" />
<rect x="172" y="37" width="3" height="2" fill="#ffffff" />
<rect x="176" y="37" width="3" height="2" fill="#ffffff" />
<rect x="180" y="37" width="3" height="2" fill="#ffffff" />
</g>
<g shape-rendering="crispEdges">
<rect x="180" y="28" width="8" height="4" fill="#f6f6f6" />
<rect x="181" y="29" width="6" height="2" fill="#cc1418" />
</g>
<g shape-rendering="crispEdges">
<rect x="199" y="28" width="15" height="13" fill="#fafafa" />
<rect x="200" y="29" width="13" height="11" fill="#444444" />
<rect x="201" y="31" width="3" height="2" fill="#ffffff" />
<rect x="205" y="31" width="3" height="2" fill="#a4dca4" />
<rect x="209" y="31" width="3" height="2" fill="#ffffff" />
<rect x="201" y="34" width="3" height="2" fill="#ffffff" />
<rect x="205" y="34" width="3" height="2" fill="#a4dca4" />
<rect x="209" y="34" width="3" height="2" fill="#ffffff" />
<rect x="201" y="37" width="3" height="2" fill="#ffffff" />
<rect x="205" y="37" width="3" height="2" fill="#a4dca4" />
<rect x="209" y="37" width="3" height="2" fill="#ffffff" />
</g>
<g shape-rendering="crispEdges">
<rect x="209" y="28" width="8" height="4" fill="#f6f6f6" />
<rect x="211" y="26" width="4" height="8" fill="#f6f6f6" />
<rect x="210" y="29" width="6" height="2" fill="#149414" />
<rect x="212" y="27" width="2" height="6" fill="#149414" />
</g>
<g shape-rendering="crispEdges">
<rect x="222" y="27" width="15" height="10" fill="#fafafa" />
<rect x="223" y="28" width="13" height="8" fill="#444444" />
<rect x="224" y="30" width="3" height="2" fill="#ffffff" />
<rect x="228" y="30" width="3" height="2" fill="#a4dca4" />
<rect x="232" y="30" width="3" height="2" fill="#ffffff" />
<rect x="224" y="33" width="3" height="2" fill="#ffffff" />
<rect x="228" y="33" width="3" height="2" fill="#a4dca4" />
<rect x="232" y="33" width="3" height="2" fill="#ffffff" />
</g>
<g shape-rendering="crispEdges">
<rect x="232" y="27" width="8" height="4" fill="#f6f6f6" />
<rect x="234" y="25" width="4" height="8" fill="#f6f6f6" />
<rect x="233" y="28" width="6" height="2" fill="#149414" />
<rect x="235" y="26" width="2" height="6" fill="#149414" />
</g>
<text x="231.5" y="42" font-family="Liberation Sans,sans-serif" font-size="8.5" font-weight="bold" fill="#1fa01f" letter-spacing="-0.3">ct</text>
<g shape-rendering="crispEdges">
<rect x="245" y="27" width="15" height="10" fill="#fafafa" />
<rect x="246" y="28" width="13" height="8" fill="#444444" />
<rect x="247" y="30" width="3" height="2" fill="#ffffff" />
<rect x="251" y="30" width="3" height="2" fill="#a4dca4" />
<rect x="255" y="30" width="3" height="2" fill="#ffffff" />
<rect x="247" y="33" width="3" height="2" fill="#ffffff" />
<rect x="251" y="33" width="3" height="2" fill="#a4dca4" />
<rect x="255" y="33" width="3" height="2" fill="#ffffff" />
</g>
<g shape-rendering="crispEdges">
<rect x="255" y="27" width="8" height="4" fill="#f6f6f6" />
<rect x="257" y="25" width="4" height="8" fill="#f6f6f6" />
<rect x="256" y="28" width="6" height="2" fill="#149414" />
<rect x="258" y="26" width="2" height="6" fill="#149414" />
</g>
<text x="246.5" y="42" font-family="Liberation Sans,sans-serif" font-size="9" font-weight="bold" fill="#1fa01f" letter-spacing="-0.1">a<tspan fill="#d01818">+</tspan>b</text>
<path d="M273.8 30.8L280.2 37.2M280.2 30.8L273.8 37.2" stroke="#c6a4a4" stroke-width="1.9" fill="none"/>
<path d="M309.4 30.9Q311 30.3 311 29.2V26.65H298.8V29.5L303.9 34.2V40.4" stroke="#3a3a3a" stroke-width="1.6" fill="none" stroke-linejoin="miter"/>
<circle cx="310.1" cy="37.2" r="3.05" fill="#d03434"/>
<path d="M332.4 30.9Q334 30.3 334 29.2V26.65H321.8V29.5L326.9 34.2V40.4" stroke="#3a3a3a" stroke-width="1.6" fill="none" stroke-linejoin="miter"/>
<g shape-rendering="crispEdges">
<rect x="329" y="35" width="8" height="4" fill="#f6f6f6" />
<rect x="331" y="33" width="4" height="8" fill="#f6f6f6" />
<rect x="330" y="36" width="6" height="2" fill="#149414" />
<rect x="332" y="34" width="2" height="6" fill="#149414" />
</g>
<polygon points="358.45,27.80 360.07,31.78 364.35,32.08 361.07,34.85 362.09,39.02 358.45,36.75 354.81,39.02 355.83,34.85 352.55,32.08 356.83,31.78" fill="none" stroke="#404040" stroke-width="1.15" stroke-linejoin="miter"/>
<path d="M371.5 31.8H377L374.25 35.2Z" fill="#3b4a5c"/>
<g shape-rendering="crispEdges">
<rect x="384" y="28" width="2" height="2" fill="#303030" />
<rect x="384" y="32" width="2" height="2" fill="#303030" />
<rect x="384" y="36" width="2" height="2" fill="#303030" />
<rect x="387" y="28" width="9" height="2" fill="#303030" />
<rect x="387" y="32" width="3" height="2" fill="#303030" />
<rect x="387" y="36" width="3" height="2" fill="#303030" />
<rect x="390" y="30" width="10" height="10" fill="#f4f4f4" />
<rect x="391" y="31" width="8" height="8" fill="#0a5cd0" />
<rect x="393" y="32" width="4" height="3" fill="#ffffff" />
<rect x="394" y="36" width="2" height="2" fill="#ffffff" />
</g>
<g shape-rendering="crispEdges">
<rect x="414" y="27" width="6" height="6" fill="#8c8c8c" />
<rect x="415" y="28" width="4" height="4" fill="#fafafa" />
<rect x="421" y="27" width="6" height="6" fill="#a3b4cb" />
<rect x="414" y="34" width="6" height="6" fill="#9c9c9c" />
<rect x="421" y="34" width="6" height="6" fill="#8aa88a" />
<rect x="423" y="36" width="2" height="2" fill="#ffffff" />
</g>
<path d="M441.6 28H449Q450 28 450 29V39Q450 40 449 40H437Q436 40 436 39V31.4" stroke="#0a60cc" stroke-width="2" fill="none"/>
<path d="M436.5 26.1L442.5 32.1" stroke="#f4f4f4" stroke-width="4.6" fill="none"/>
<path d="M436.7 26.2L442.3 31.9" stroke="#0a60cc" stroke-width="3.0" fill="none" stroke-linecap="butt"/>
<path d="M441.9 33.4L443.9 31.4L444.6 34.9Z" fill="#0a60cc"/>
<path d="M1157.8 39.2V28.7H1162.3L1164.3 31H1167.9V28.7H1172.3L1174.4 31H1178.3V39.2Z M1167.9 31V39.2" stroke="#444" stroke-width="1.5" fill="none" stroke-linejoin="miter"/>
<defs><linearGradient id="bg1" x1="0" y1="0" x2="0" y2="1"><stop offset="0" stop-color="#f0f0f0"/><stop offset="0.48" stop-color="#e9e9e9"/><stop offset="0.5" stop-color="#d9d9d9"/><stop offset="1" stop-color="#cdcdcd"/></linearGradient><linearGradient id="ar" x1="0" y1="0" x2="0" y2="1"><stop offset="0" stop-color="#2c2c2c"/><stop offset="1" stop-color="#8a8a8a"/></linearGradient><linearGradient id="ar2" x1="0" y1="0" x2="0" y2="1"><stop offset="0" stop-color="#8a8a8a"/><stop offset="1" stop-color="#2c2c2c"/></linearGradient></defs>
<path d="M1117.5 0.5H1146.5V11.5Q1146.5 14.5 1143.5 14.5H1120.5Q1117.5 14.5 1117.5 11.5Z" fill="url(#bg1)" stroke="#3c4a53" stroke-width="1"/>
<path d="M1118.5 1.5H1145.5V11.5Q1145.5 13.5 1143.5 13.5H1120.5Q1118.5 13.5 1118.5 11.5Z" fill="none" stroke="#fafafa" stroke-opacity="0.8" stroke-width="1"/>
<path d="M1131.5 1V14" stroke="#3c4a53" stroke-width="1"/>
<path d="M1126.2 4V11L1121.8 7.5Z" fill="#9c9c9c"/>
<path d="M1138 4V11L1142.4 7.5Z" fill="#9c9c9c"/>
<path d="M1150.5 0.5H1165.5V11.5Q1165.5 14.5 1162.5 14.5H1153.5Q1150.5 14.5 1150.5 11.5Z" fill="url(#bg1)" stroke="#3c4a53" stroke-width="1"/>
<path d="M1151.5 1.5H1164.5V11.5Q1164.5 13.5 1162.5 13.5H1153.5Q1151.5 13.5 1151.5 11.5Z" fill="none" stroke="#fafafa" stroke-opacity="0.8" stroke-width="1"/>
<path d="M1154.6 6H1162.4L1158.5 10.4Z" fill="#2b3a44"/>
<path d="M1170.5 0.5H1185.5V11.5Q1185.5 14.5 1182.5 14.5H1173.5Q1170.5 14.5 1170.5 11.5Z" fill="url(#bg1)" stroke="#3c4a53" stroke-width="1"/>
<path d="M1171.5 1.5H1184.5V11.5Q1184.5 13.5 1182.5 13.5H1173.5Q1171.5 13.5 1171.5 11.5Z" fill="none" stroke="#fafafa" stroke-opacity="0.8" stroke-width="1"/>
<g shape-rendering="crispEdges">
<rect x="1176" y="4" width="6" height="2" fill="#2b3a44" />
<rect x="1176" y="4" width="1" height="5" fill="#2b3a44" />
<rect x="1181" y="4" width="1" height="5" fill="#2b3a44" />
<rect x="1176" y="8" width="6" height="1" fill="#2b3a44" />
<rect x="1174" y="7" width="6" height="5" fill="#e4e4e4" />
<rect x="1174" y="7" width="6" height="2" fill="#2b3a44" />
<rect x="1174" y="7" width="1" height="5" fill="#2b3a44" />
<rect x="1179" y="7" width="1" height="5" fill="#2b3a44" />
<rect x="1174" y="11" width="6" height="1" fill="#2b3a44" />
</g>
<path d="M1167 100.6L1171.5 95.6L1176 100.6Z" fill="url(#ar)"/>
<path d="M1167 624L1176 624L1171.5 629Z" fill="url(#ar2)"/>
</svg>
</body></html>
